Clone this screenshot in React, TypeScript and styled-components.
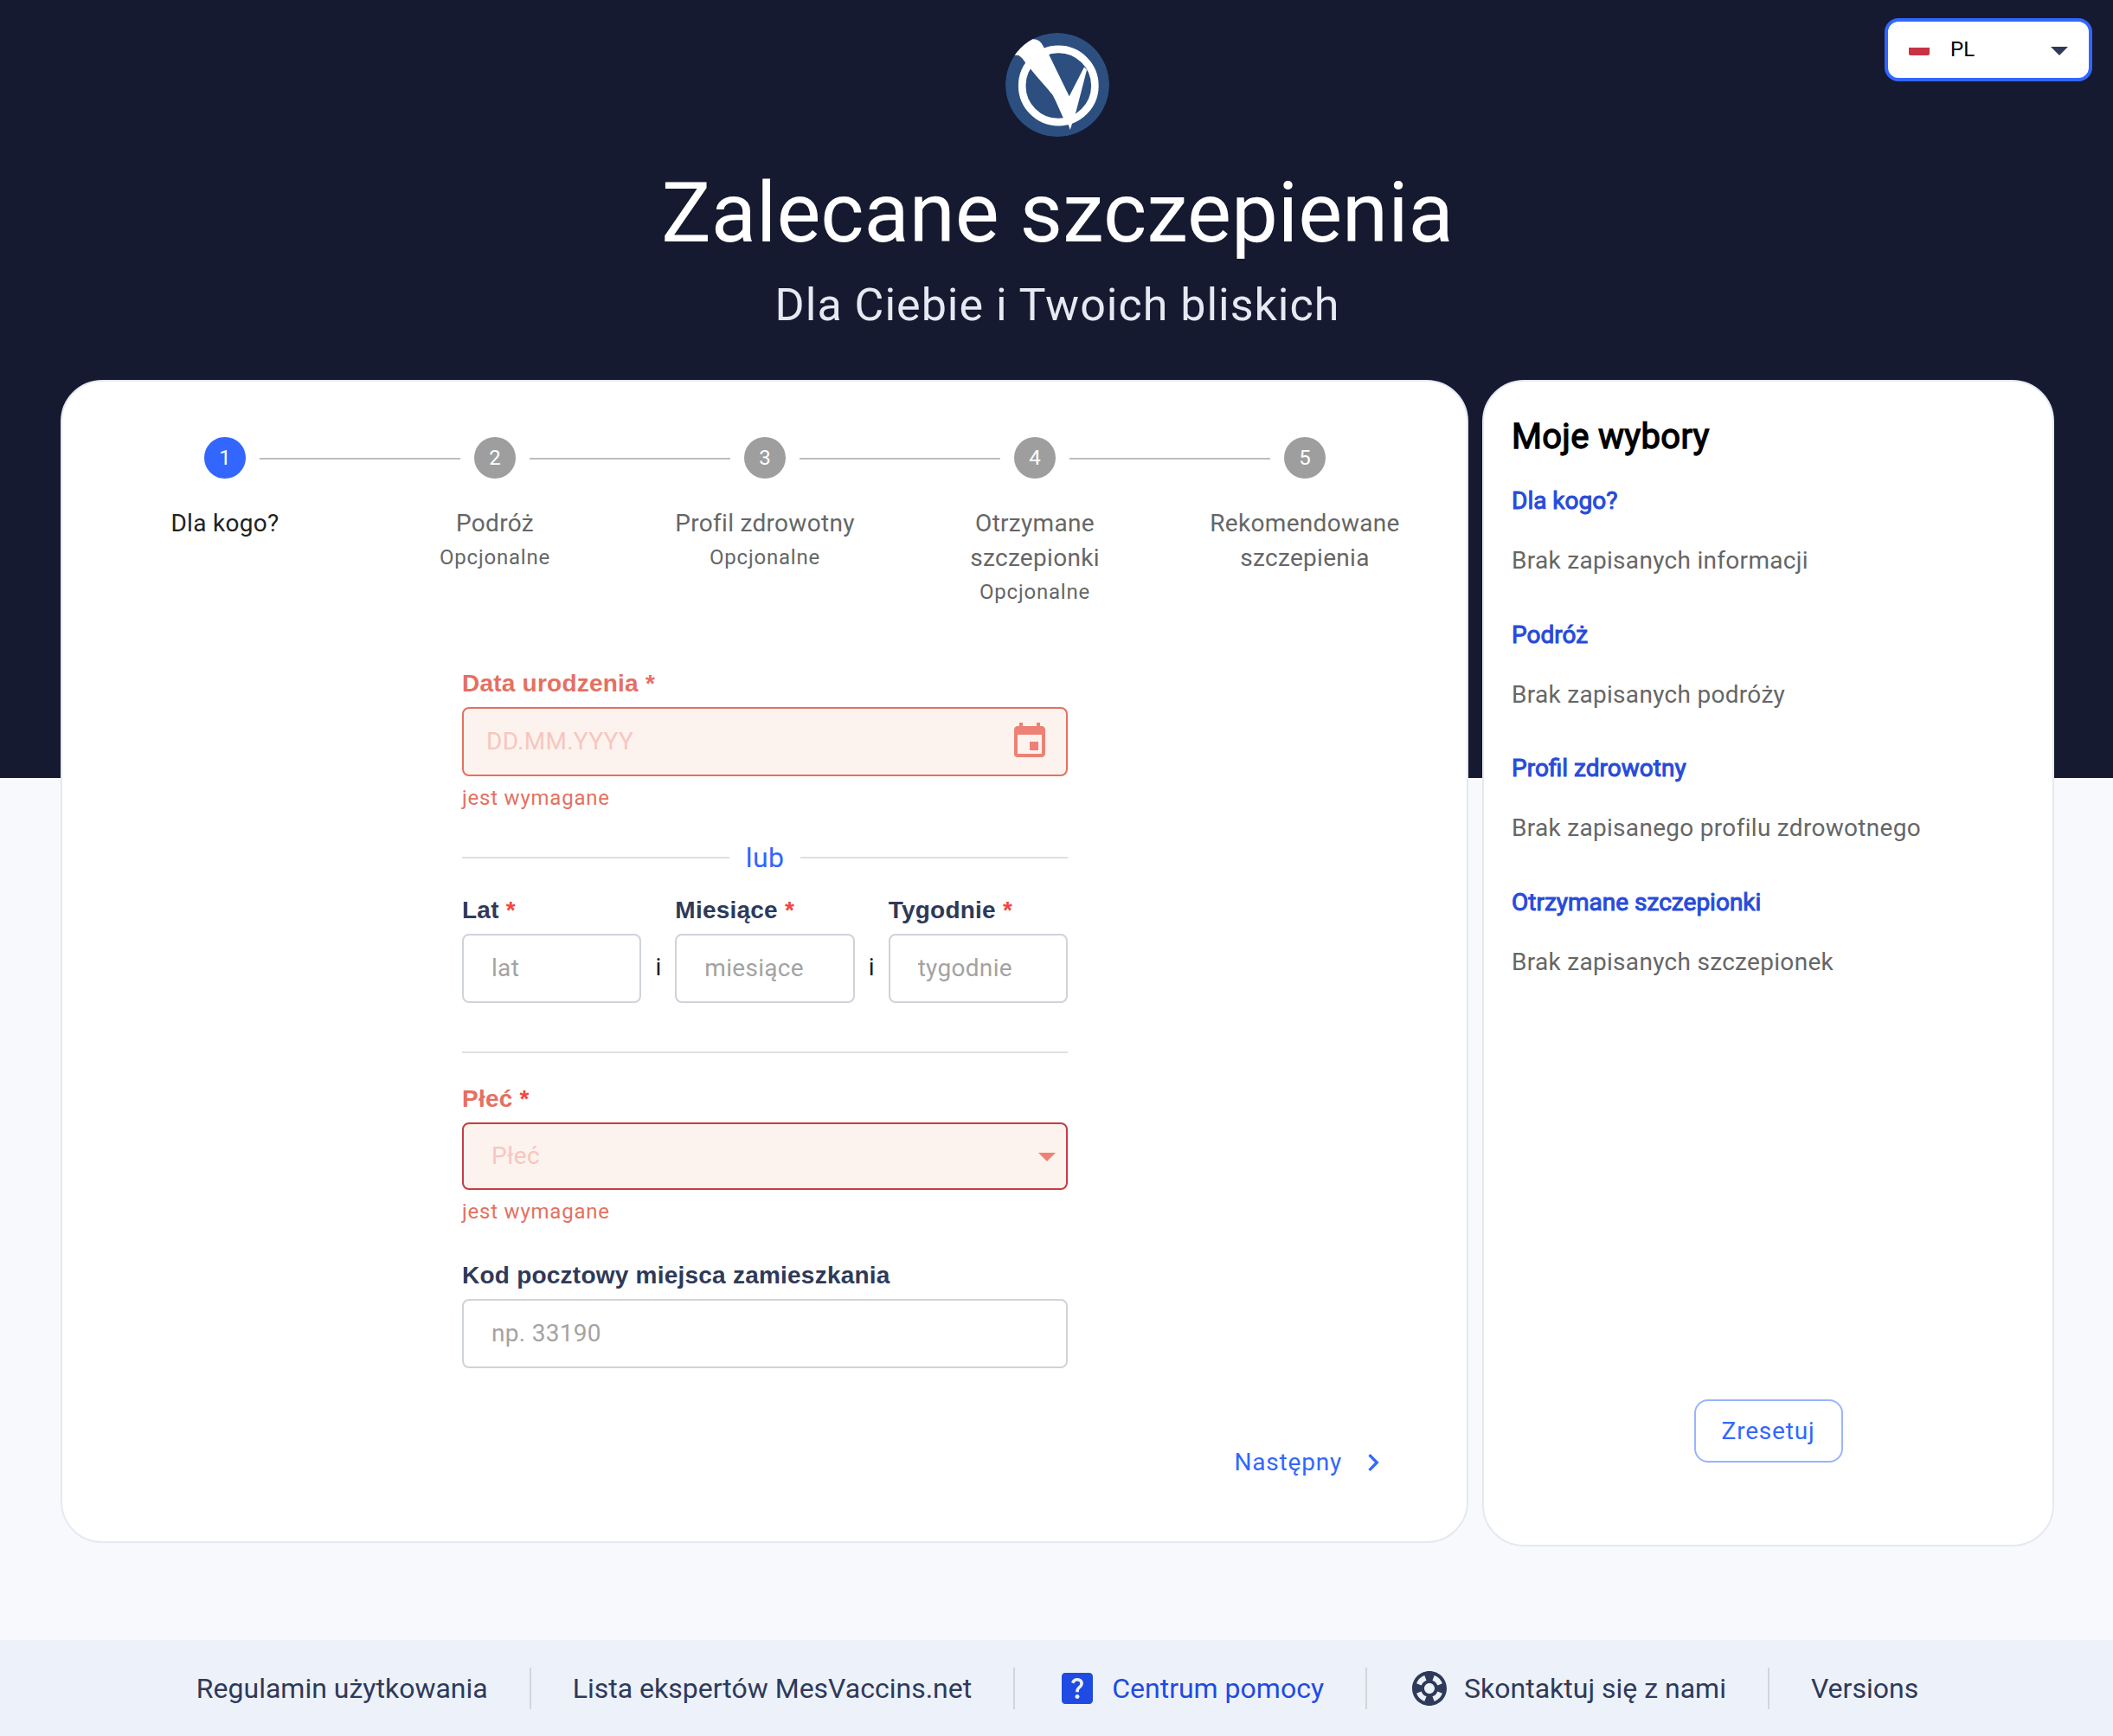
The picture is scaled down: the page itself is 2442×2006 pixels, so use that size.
import styled, { createGlobalStyle, css } from "styled-components"
import { MdArrowDropDown, MdChevronRight, MdEvent, MdHelpCenter, MdSupport } from "react-icons/md"

const GlobalStyle = createGlobalStyle`
  * {
    box-sizing: border-box;
  }

  body {
    margin: 0;
    font-family: Roboto, sans-serif;
    background: #f7f9fc;
  }
`

const Page = styled.div`
  position: relative;
  display: flex;
  flex-direction: column;
  height: 2006px;
  background: linear-gradient(#151a30 899px, #f7f9fc 899px);
`

const Header = styled.header`
  display: flex;
  flex-direction: column;
  align-items: center;
  height: 439px;
  padding-top: 38px;
  padding-left: 2px;
`

const Title = styled.h1`
  margin: 32px 0 19px;
  color: #ffffff;
  font-size: 96px;
  font-weight: 400;
  line-height: 112px;
`

const Subtitle = styled.p`
  margin: 0;
  color: #e4e9f2;
  font-size: 52px;
  line-height: 64px;
  letter-spacing: 1px;
`

const LanguageSelect = styled.button`
  position: absolute;
  top: 21px;
  right: 24px;
  display: flex;
  align-items: center;
  width: 240px;
  height: 73px;
  padding: 0 10px 0 24px;
  border: 4px solid #3366ff;
  border-radius: 16px;
  background: #ffffff;
  color: #000000;
  font-family: inherit;
  font-size: 24px;
`

const Flag = styled.span`
  width: 24px;
  height: 18px;
  margin-bottom: 5px;
  border-radius: 2px;
  background: linear-gradient(#ffffff 50%, #c73344 50%);
`

const LanguageCode = styled.span`
  flex: 1;
  margin: 0 0 2px 24px;
  text-align: left;
`

const ArrowIcon = styled(MdArrowDropDown)`
  width: 48px;
  height: 48px;
  color: #2e3a59;
`

const Columns = styled.main`
  display: flex;
  align-items: flex-start;
  gap: 16px;
  padding: 0 68px 0 70px;
`

const Card = styled.section`
  display: flex;
  flex-direction: column;
  border: 2px solid #e4e9f2;
  border-radius: 48px;
  background: #ffffff;
`

const WizardCard = styled(Card)`
  width: 1627px;
  height: 1344px;
  padding: 64px 32px 0;
`

const SummaryCard = styled(Card)`
  width: 661px;
  height: 1348px;
  padding: 40px 32px 95px;
`

const Stepper = styled.ol`
  display: flex;
  margin: 0 -1px 0 0;
  padding: 0;
  list-style: none;
`

const Step = styled.li`
  display: flex;
  flex: 1;
  flex-direction: column;
`

const StepTrack = styled.div`
  display: flex;
  align-items: center;
  gap: 16px;
`

const StepLine = styled.span<{ $hidden?: boolean }>`
  flex: 1;
  height: 2px;
  margin-top: 2px;
  background: ${({ $hidden }) => ($hidden ? 'transparent' : '#bdbdbd')};
`

const StepCircle = styled.span<{ $active?: boolean }>`
  display: flex;
  align-items: center;
  justify-content: center;
  width: 48px;
  height: 48px;
  border-radius: 50%;
  background: ${({ $active }) => ($active ? '#3366ff' : '#9e9e9e')};
  color: #ffffff;
  font-size: 24px;
`

const StepLabel = styled.span<{ $active?: boolean }>`
  margin-top: 32px;
  padding: 0 16px;
  color: ${({ $active }) => ($active ? '#212121' : '#666666')};
  font-size: 28px;
  line-height: 40px;
  letter-spacing: 0.3px;
  text-align: center;
`

const StepOptional = styled.span`
  margin-top: -1px;
  color: #666666;
  font-size: 24px;
  line-height: 40px;
  letter-spacing: 0.8px;
  text-align: center;
`

const Form = styled.form`
  display: flex;
  flex-direction: column;
  width: 700px;
  margin: 65px 0 0 430px;
`

const Field = styled.div`
  display: flex;
  flex: 1;
  flex-direction: column;
  min-width: 0;
`

const Label = styled.label<{ $error?: boolean }>`
  margin: 1px 0 7px;
  color: ${({ $error }) => ($error ? '#e57061' : '#2e3a59')};
  font-family: "Liberation Sans", Arial, sans-serif;
  font-size: 28px;
  font-weight: 700;
  line-height: 40px;
  letter-spacing: 0.23px;
`

const Asterisk = styled.span<{ $muted?: boolean }>`
  color: ${({ $muted }) => ($muted ? '#e57061' : '#f0483e')};
`

const errorBox = css`
  border-color: #e57061;
  background: #fdf3ee;
`

const InputBox = styled.div<{ $error?: boolean }>`
  display: flex;
  align-items: center;
  height: 80px;
  padding: 0 30px 0 32px;
  border: 2px solid #cfd3da;
  border-radius: 8px;
  ${({ $error }) => $error && errorBox}
`

const DateBox = styled(InputBox)`
  padding: 0 18px 0 26px;
`

const SelectBox = styled(InputBox)`
  justify-content: space-between;
  height: 78px;
  padding-right: 0;
  border-color: #c73c44;

  ${ArrowIcon} {
    margin-right: -2px;
    color: #ee8175;
  }
`

const Input = styled.input`
  flex: 1;
  min-width: 0;
  width: 100%;
  padding: 0 0 2px;
  border: 0;
  outline: 0;
  background: transparent;
  font-family: inherit;
  font-size: 28px;
  letter-spacing: 0.3px;

  &::placeholder {
    color: #a3a3a3;
    opacity: 1;
  }

  ${DateBox} &::placeholder {
    color: #f7c6be;
  }
`

const SelectPlaceholder = styled.span`
  padding-bottom: 2px;
  color: #f7c6be;
  font-size: 28px;
  letter-spacing: 0.3px;
`

const CalendarIcon = styled(MdEvent)`
  width: 48px;
  height: 48px;
  color: #ee8175;
`

const ErrorText = styled.span`
  margin-top: 5px;
  color: #e57061;
  font-size: 24px;
  line-height: 40px;
  letter-spacing: 0.78px;
`

const OrDivider = styled.div`
  display: flex;
  align-items: center;
  gap: 19.2px;
  height: 48px;
  margin: 25px 0 16px;
  color: #3366ff;
  font-size: 32px;
  letter-spacing: 0.3px;

  &::before,
  &::after {
    content: "";
    flex: 1;
    height: 2px;
    background: #e0e0e0;
  }
`

const AgeRow = styled.div`
  display: flex;
  align-items: flex-end;
`

const AgeJoin = styled.span`
  width: 39px;
  height: 80px;
  color: #1c1c1c;
  font-size: 28px;
  line-height: 78px;
  text-align: center;
`

const Rule = styled.hr`
  width: 100%;
  height: 2px;
  margin: 56px 0 32px;
  border: 0;
  background: #e0e0e0;
`

const PostalField = styled(Field)`
  margin-top: 33px;
`

const NextButton = styled.button`
  display: flex;
  align-items: center;
  align-self: flex-end;
  gap: 16px;
  margin: 88px 56px 0 0;
  padding: 0;
  border: 0;
  background: transparent;
  color: #3366ff;
  font-family: inherit;
  font-size: 28px;
  line-height: 42px;
  letter-spacing: 0.8px;

  svg {
    width: 40px;
    height: 40px;
  }
`

const SummaryTitle = styled.h2`
  margin: 0 0 30px;
  color: #000000;
  font-size: 40px;
  font-weight: 400;
  line-height: 48px;
  letter-spacing: 0.3px;
  -webkit-text-stroke: 1.3px #000000;
`

const SummarySection = styled.div`
  margin-bottom: 45.6px;
`

const SummaryHeading = styled.h3`
  margin: 0 0 29px;
  color: #274bdb;
  font-size: 28px;
  font-weight: 400;
  line-height: 40px;
  -webkit-text-stroke: 1px #274bdb;
`

const SummaryText = styled.p`
  margin: 0;
  color: #666666;
  font-size: 28px;
  line-height: 40px;
  letter-spacing: 0.3px;
`

const ResetButton = styled.button`
  align-self: center;
  width: 172px;
  height: 73px;
  margin-top: auto;
  padding: 0;
  border: 2px solid #99b3ff;
  border-radius: 16px;
  background: #ffffff;
  color: #3366ff;
  font-family: inherit;
  font-size: 28px;
  letter-spacing: 0.8px;
`

const Footer = styled.footer`
  display: flex;
  justify-content: center;
  height: 111px;
  margin-top: auto;
  padding: 32px 0 0 2px;
  background: #edf1f9;
`

const FooterLink = styled.a<{ $highlight?: boolean }>`
  display: flex;
  align-items: center;
  gap: 16px;
  height: 48px;
  padding: 0 48px;
  border-right: 2px solid #d3d5dc;
  color: ${({ $highlight }) => ($highlight ? '#1f4be3' : '#2e3a59')};
  font-size: 32px;
  white-space: nowrap;

  &:last-child {
    border-right: 0;
  }

  svg {
    width: 48px;
    height: 48px;
  }
`

const steps = [
  { label: 'Dla kogo?', optional: false },
  { label: 'Podróż', optional: true },
  { label: 'Profil zdrowotny', optional: true },
  { label: 'Otrzymane szczepionki', optional: true },
  { label: 'Rekomendowane szczepienia', optional: false },
]

const ages = [
  { label: 'Lat', placeholder: 'lat' },
  { label: 'Miesiące', placeholder: 'miesiące' },
  { label: 'Tygodnie', placeholder: 'tygodnie' },
]

const summary = [
  { title: 'Dla kogo?', text: 'Brak zapisanych informacji' },
  { title: 'Podróż', text: 'Brak zapisanych podróży' },
  { title: 'Profil zdrowotny', text: 'Brak zapisanego profilu zdrowotnego' },
  { title: 'Otrzymane szczepionki', text: 'Brak zapisanych szczepionek' },
]

function Logo() {
  return (
    <svg width="120" height="120" viewBox="0 0 120 120">
      <clipPath id="logo-disc">
        <circle cx="60" cy="60" r="60" />
      </clipPath>
      <g clipPath="url(#logo-disc)">
        <circle cx="60" cy="60" r="60" fill="#2c4f80" />
        <circle cx="61.3" cy="61" r="42.1" fill="none" stroke="#ffffff" strokeWidth="8.6" />
        <path
          fill="#ffffff"
          d="M8 25.5 26 6 C31 7.5 34 7.2 36.5 8 C40.5 9.5 42.5 13 44.7 17.3 L50.3 25.3 73.7 73.3 91 39.5 94 42.7 C90 58 86 74 81.3 92 L77.3 104 74.7 112 73 106.7 66.7 98 C62 88 59 80 54.7 72 C46 61 37 52 28.7 41.3 L23.3 34.7 C20.5 30.5 18 27.5 15.3 26 Z"
        />
      </g>
    </svg>
  )
}

export default function App() {
  return (
    <Page>
      <GlobalStyle />
      <Header>
        <Logo />
        <Title>Zalecane szczepienia</Title>
        <Subtitle>Dla Ciebie i Twoich bliskich</Subtitle>
      </Header>
      <LanguageSelect>
        <Flag />
        <LanguageCode>PL</LanguageCode>
        <ArrowIcon />
      </LanguageSelect>

      <Columns>
        <WizardCard>
          <Stepper>
            {steps.map((step, i) => (
              <Step key={step.label}>
                <StepTrack>
                  <StepLine $hidden={i === 0} />
                  <StepCircle $active={i === 0}>{i + 1}</StepCircle>
                  <StepLine $hidden={i === steps.length - 1} />
                </StepTrack>
                <StepLabel $active={i === 0}>{step.label}</StepLabel>
                {step.optional && <StepOptional>Opcjonalne</StepOptional>}
              </Step>
            ))}
          </Stepper>

          <Form>
            <Field>
              <Label $error>Data urodzenia <Asterisk $muted>*</Asterisk></Label>
              <DateBox $error>
                <Input placeholder="DD.MM.YYYY" />
                <CalendarIcon />
              </DateBox>
              <ErrorText>jest wymagane</ErrorText>
            </Field>

            <OrDivider>lub</OrDivider>

            <AgeRow>
              {ages.map((age, i) => [
                i > 0 && <AgeJoin key={age.label + '-join'}>i</AgeJoin>,
                <Field key={age.label}>
                  <Label>{age.label} <Asterisk>*</Asterisk></Label>
                  <InputBox>
                    <Input placeholder={age.placeholder} />
                  </InputBox>
                </Field>,
              ])}
            </AgeRow>

            <Rule />

            <Field>
              <Label $error>Płeć <Asterisk>*</Asterisk></Label>
              <SelectBox $error>
                <SelectPlaceholder>Płeć</SelectPlaceholder>
                <ArrowIcon />
              </SelectBox>
              <ErrorText>jest wymagane</ErrorText>
            </Field>

            <PostalField>
              <Label>Kod pocztowy miejsca zamieszkania</Label>
              <InputBox>
                <Input placeholder="np. 33190" />
              </InputBox>
            </PostalField>
          </Form>

          <NextButton>
            Następny
            <MdChevronRight />
          </NextButton>
        </WizardCard>

        <SummaryCard>
          <SummaryTitle>Moje wybory</SummaryTitle>
          {summary.map((item) => (
            <SummarySection key={item.title}>
              <SummaryHeading>{item.title}</SummaryHeading>
              <SummaryText>{item.text}</SummaryText>
            </SummarySection>
          ))}
          <ResetButton>Zresetuj</ResetButton>
        </SummaryCard>
      </Columns>

      <Footer>
        <FooterLink>Regulamin użytkowania</FooterLink>
        <FooterLink>Lista ekspertów MesVaccins.net</FooterLink>
        <FooterLink $highlight>
          <MdHelpCenter />
          Centrum pomocy
        </FooterLink>
        <FooterLink>
          <MdSupport />
          Skontaktuj się z nami
        </FooterLink>
        <FooterLink>Versions</FooterLink>
      </Footer>
    </Page>
  )
}
